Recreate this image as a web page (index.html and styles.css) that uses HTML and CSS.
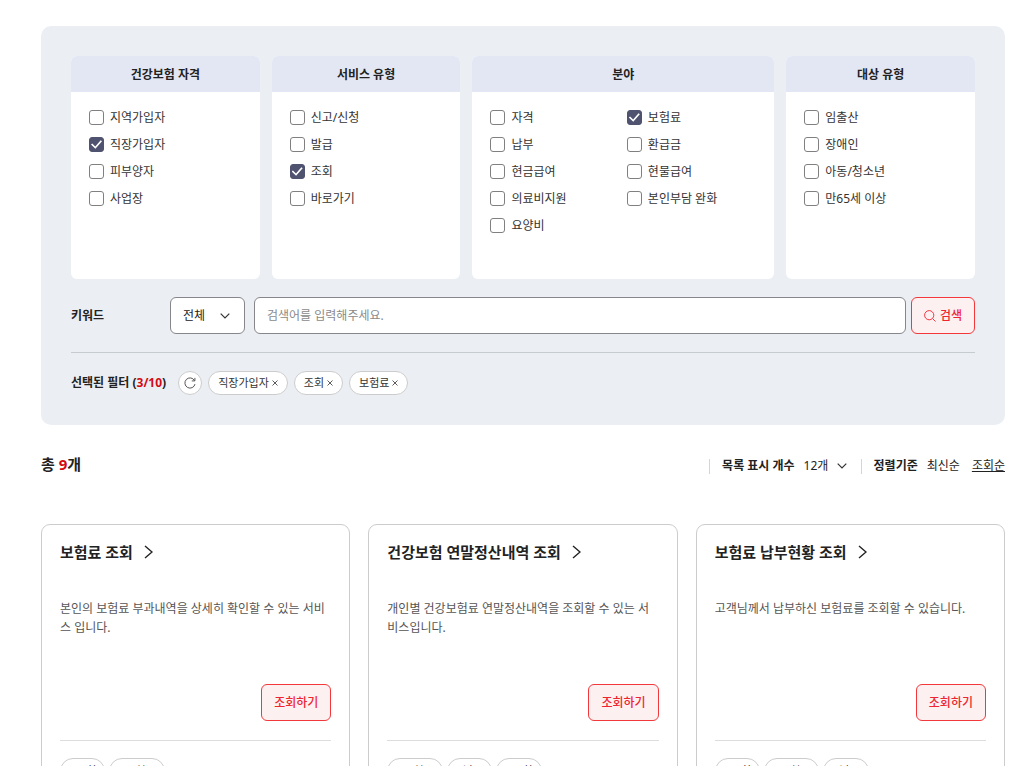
FILE: index.html
```html
<!DOCTYPE html>
<html lang="ko">
<head>
<meta charset="utf-8">
<meta name="viewport" content="width=device-width, initial-scale=1">
<title>민원 서비스 찾기</title>
<link rel="stylesheet" href="styles.css">
</head>
<body>
<main class="page">
  <form class="filter-panel">
    <div class="filter-groups">
      <fieldset class="group" aria-labelledby="g1">
        <h2 class="group-title" id="g1">건강보험 자격</h2>
        <div class="options">
          <label class="option"><input type="checkbox">지역가입자</label>
          <label class="option"><input type="checkbox" checked>직장가입자</label>
          <label class="option"><input type="checkbox">피부양자</label>
          <label class="option"><input type="checkbox">사업장</label>
        </div>
      </fieldset>
      <fieldset class="group" aria-labelledby="g2">
        <h2 class="group-title" id="g2">서비스 유형</h2>
        <div class="options">
          <label class="option"><input type="checkbox">신고/신청</label>
          <label class="option"><input type="checkbox">발급</label>
          <label class="option"><input type="checkbox" checked>조회</label>
          <label class="option"><input type="checkbox">바로가기</label>
        </div>
      </fieldset>
      <fieldset class="group" aria-labelledby="g3">
        <h2 class="group-title" id="g3">분야</h2>
        <div class="options options-two">
          <label class="option"><input type="checkbox">자격</label>
          <label class="option"><input type="checkbox" checked>보험료</label>
          <label class="option"><input type="checkbox">납부</label>
          <label class="option"><input type="checkbox">환급금</label>
          <label class="option"><input type="checkbox">현금급여</label>
          <label class="option"><input type="checkbox">현물급여</label>
          <label class="option"><input type="checkbox">의료비지원</label>
          <label class="option"><input type="checkbox">본인부담 완화</label>
          <label class="option"><input type="checkbox">요양비</label>
        </div>
      </fieldset>
      <fieldset class="group" aria-labelledby="g4">
        <h2 class="group-title" id="g4">대상 유형</h2>
        <div class="options">
          <label class="option"><input type="checkbox">임출산</label>
          <label class="option"><input type="checkbox">장애인</label>
          <label class="option"><input type="checkbox">아동/청소년</label>
          <label class="option"><input type="checkbox">만65세 이상</label>
        </div>
      </fieldset>
    </div>

    <div class="search-row">
      <label class="row-label keyword-label" for="keyword">키워드</label>
      <span class="select-box">
        <select class="scope" aria-label="검색 범위"><option>전체</option></select>
        <svg class="chevron" viewBox="0 0 10 6" aria-hidden="true"><path d="M.7.7 5 5 9.3.7"/></svg>
      </span>
      <input class="keyword" id="keyword" type="text" placeholder="검색어를 입력해주세요.">
      <button class="btn btn-search" type="button">
        <svg class="search-icon" viewBox="0 0 12 12" aria-hidden="true"><circle cx="5.2" cy="5.2" r="4.6"/><path d="m8.6 8.6 2.9 2.9"/></svg>검색
      </button>
    </div>

    <div class="selected-row">
      <strong class="row-label">선택된 필터 (<em class="accent">3/10</em>)</strong>
      <div class="chips">
        <button class="reset" type="button" aria-label="초기화">
          <svg class="reset-icon" viewBox="0 0 12 12" aria-hidden="true"><path d="M11 7.1A5.1 5.1 0 1 1 10.4 3.4M10.9.9v3H7.8"/></svg>
        </button>
        <button class="chip" type="button">직장가입자<svg class="close" viewBox="0 0 6 6" aria-hidden="true"><path d="m.5.5 5 5m0-5-5 5"/></svg></button>
        <button class="chip" type="button">조회<svg class="close" viewBox="0 0 6 6" aria-hidden="true"><path d="m.5.5 5 5m0-5-5 5"/></svg></button>
        <button class="chip" type="button">보험료<svg class="close" viewBox="0 0 6 6" aria-hidden="true"><path d="m.5.5 5 5m0-5-5 5"/></svg></button>
      </div>
    </div>
  </form>

  <div class="result-bar">
    <p class="total">총 <em class="accent">9</em>개</p>
    <div class="tools">
      <div class="tool">
        <label class="tool-label" for="page-size">목록 표시 개수</label>
        <span class="select-box">
          <select class="page-size" id="page-size"><option>12개</option></select>
          <svg class="chevron chevron-flush" viewBox="0 0 10 6" aria-hidden="true"><path d="M.7.7 5 5 9.3.7"/></svg>
        </span>
      </div>
      <div class="tool">
        <span class="tool-label">정렬기준</span>
        <a class="sort" href="#">최신순</a>
        <a class="sort sort-active" href="#">조회순</a>
      </div>
    </div>
  </div>

  <section class="cards">
    <article class="card">
      <h3 class="card-title"><a href="#">보험료 조회<svg class="arrow" viewBox="0 0 9 14" aria-hidden="true"><path d="m1 1 7 6-7 6"/></svg></a></h3>
      <p class="card-text">본인의 보험료 부과내역을 상세히 확인할 수 있는 서비스 입니다.</p>
      <button class="btn btn-card" type="button">조회하기</button>
      <div class="tags"><span class="tag">#조회</span><span class="tag">#보험료</span></div>
    </article>
    <article class="card">
      <h3 class="card-title"><a href="#">건강보험 연말정산내역 조회<svg class="arrow" viewBox="0 0 9 14" aria-hidden="true"><path d="m1 1 7 6-7 6"/></svg></a></h3>
      <p class="card-text">개인별 건강보험료 연말정산내역을 조회할 수 있는 서비스입니다.</p>
      <button class="btn btn-card" type="button">조회하기</button>
      <div class="tags"><span class="tag">#보험료</span><span class="tag">#납부</span><span class="tag">#조회</span></div>
    </article>
    <article class="card">
      <h3 class="card-title"><a href="#">보험료 납부현황 조회<svg class="arrow" viewBox="0 0 9 14" aria-hidden="true"><path d="m1 1 7 6-7 6"/></svg></a></h3>
      <p class="card-text">고객님께서 납부하신 보험료를 조회할 수 있습니다.</p>
      <button class="btn btn-card" type="button">조회하기</button>
      <div class="tags"><span class="tag">#조회</span><span class="tag">#보험료</span><span class="tag">#납부</span></div>
    </article>
  </section>
</main>
</body>
</html>
```
FILE: styles.css
```css
* { box-sizing: border-box; }

body {
  margin: 0;
  background: #fff;
  color: #222;
  font: 12px/18px "Noto Sans", "Noto Sans CJK KR", sans-serif;
}

button, input, select { font: inherit; color: inherit; }
button { cursor: pointer; }
a { color: inherit; text-decoration: none; }
h2, h3, p { margin: 0; }
svg { fill: none; stroke: currentColor; flex: none; }
em { font-style: normal; }

.page { padding: 26px 19px 24px 41px; }
.accent { color: #d30a12; }

.filter-panel {
  padding: 30px;
  border-radius: 10px;
  background: #ebeff4;
}

.filter-groups {
  display: grid;
  grid-template-columns: 5fr 5fr 8fr 5fr;
  gap: 12px;
}

.group {
  min-width: 0;
  min-height: 223px;
  margin: 0;
  padding: 0;
  border: 0;
  border-radius: 6px;
  background: #fff;
  overflow: hidden;
}

.group-title {
  padding: 10px 9px 8px;
  background: #e3e7f4;
  font-size: 12px;
  line-height: 18px;
  text-align: center;
}

.options {
  display: grid;
  padding: 12px 18px;
}
.options-two { grid-template-columns: 1fr 1fr; column-gap: 7px; }

.option {
  display: flex;
  align-items: center;
  gap: 6px;
  height: 27px;
  color: #333;
  white-space: nowrap;
}

.option input {
  appearance: none;
  display: grid;
  place-items: center;
  width: 15px;
  height: 15px;
  margin: 0;
  border: 1px solid #808080;
  border-radius: 3px;
  background: #fff;
}
.option input:checked { border-color: #50536f; background: #50536f; }
.option input:checked::before {
  content: "";
  width: 11px;
  height: 9px;
  background: #fff;
  clip-path: polygon(0 50%, 11% 40%, 39% 72%, 88% 4%, 100% 14%, 40% 96%);
}

.search-row {
  display: flex;
  align-items: center;
  padding: 18px 0;
  border-bottom: 1px solid #c6cbcf;
}

.row-label { font-weight: 700; white-space: nowrap; }
.keyword-label { width: 99px; }

.select-box { display: grid; align-items: center; }
.select-box > * { grid-area: 1 / 1; }
.select-box select { appearance: none; }

.scope {
  width: 75px;
  height: 37px;
  padding: 0 12px;
  border: 1px solid #86868b;
  border-radius: 6px;
  background: #fff;
}

.chevron {
  width: 10px;
  height: 6px;
  margin-right: 15px;
  justify-self: end;
  color: #333;
  stroke-width: 1.2;
  pointer-events: none;
}
.chevron-flush { margin-right: 0; }

.keyword {
  flex: 1;
  min-width: 0;
  height: 37px;
  margin: 0 5px 0 9px;
  padding: 0 12px;
  border: 1px solid #86868b;
  border-radius: 6px;
  background: #fff;
}
.keyword::placeholder { color: #8a8a8a; opacity: 1; }

.btn {
  display: flex;
  align-items: center;
  gap: 4px;
  height: 37px;
  padding: 0 12px;
  border: 1px solid #f2383b;
  border-radius: 6px;
  background: #fdf0f1;
  color: #ee2530;
  font-weight: 500;
  white-space: nowrap;
}
.search-icon { width: 12px; height: 12px; stroke-width: .9; }

.selected-row {
  display: flex;
  align-items: center;
  gap: 12px;
  padding-top: 18px;
}
.chips { display: flex; gap: 6px; }

.reset, .chip {
  display: flex;
  align-items: center;
  justify-content: center;
  height: 24px;
  border: 1px solid #ccc;
  border-radius: 12px;
  background: #fff;
}
.reset { width: 24px; padding: 0; }
.reset-icon { width: 12px; height: 12px; color: #444; stroke-width: .9; }
.chip {
  gap: 3px;
  padding: 0 9px;
  color: #333;
  font-size: 11px;
}
.close { width: 6px; height: 6px; stroke-width: .8; }

.result-bar {
  display: flex;
  align-items: flex-end;
  justify-content: space-between;
  padding: 28px 0 49px;
}
.total { font-size: 15px; line-height: 22px; font-weight: 700; }

.tools { display: flex; gap: 14px; }
.tool {
  display: flex;
  align-items: center;
  gap: 9px;
  white-space: nowrap;
}
.tool::before {
  content: "";
  width: 1px;
  height: 15px;
  margin-right: 3px;
  background: #d5d5d5;
}
.tool-label { font-weight: 700; }
.page-size {
  width: 43px;
  padding: 0;
  border: 0;
  background: none;
}
.sort + .sort { margin-left: 3px; }
.sort-active { text-decoration: underline; }

.cards {
  display: grid;
  grid-template-columns: repeat(3, 1fr);
  gap: 18px;
}

.card {
  display: flex;
  flex-direction: column;
  min-width: 0;
  padding: 15px 18px 18px;
  border: 1px solid #ccc;
  border-radius: 9px;
}

.card-title { font-size: 15px; line-height: 24px; }
.card-title a { display: flex; align-items: center; gap: 11px; }
.arrow { width: 9px; height: 14px; stroke-width: 1.4; }

.card-text {
  min-height: 85px;
  margin-top: 35px;
  color: #555;
  line-height: 19px;
}

.btn-card { align-self: flex-end; }

.tags {
  display: flex;
  gap: 4px;
  margin-top: 19px;
  padding-top: 17px;
  border-top: 1px solid #ddd;
}
.tag {
  padding: 3px 8px;
  border: 1px solid #ccc;
  border-radius: 13px;
  color: #444;
  font-size: 11px;
}
```
